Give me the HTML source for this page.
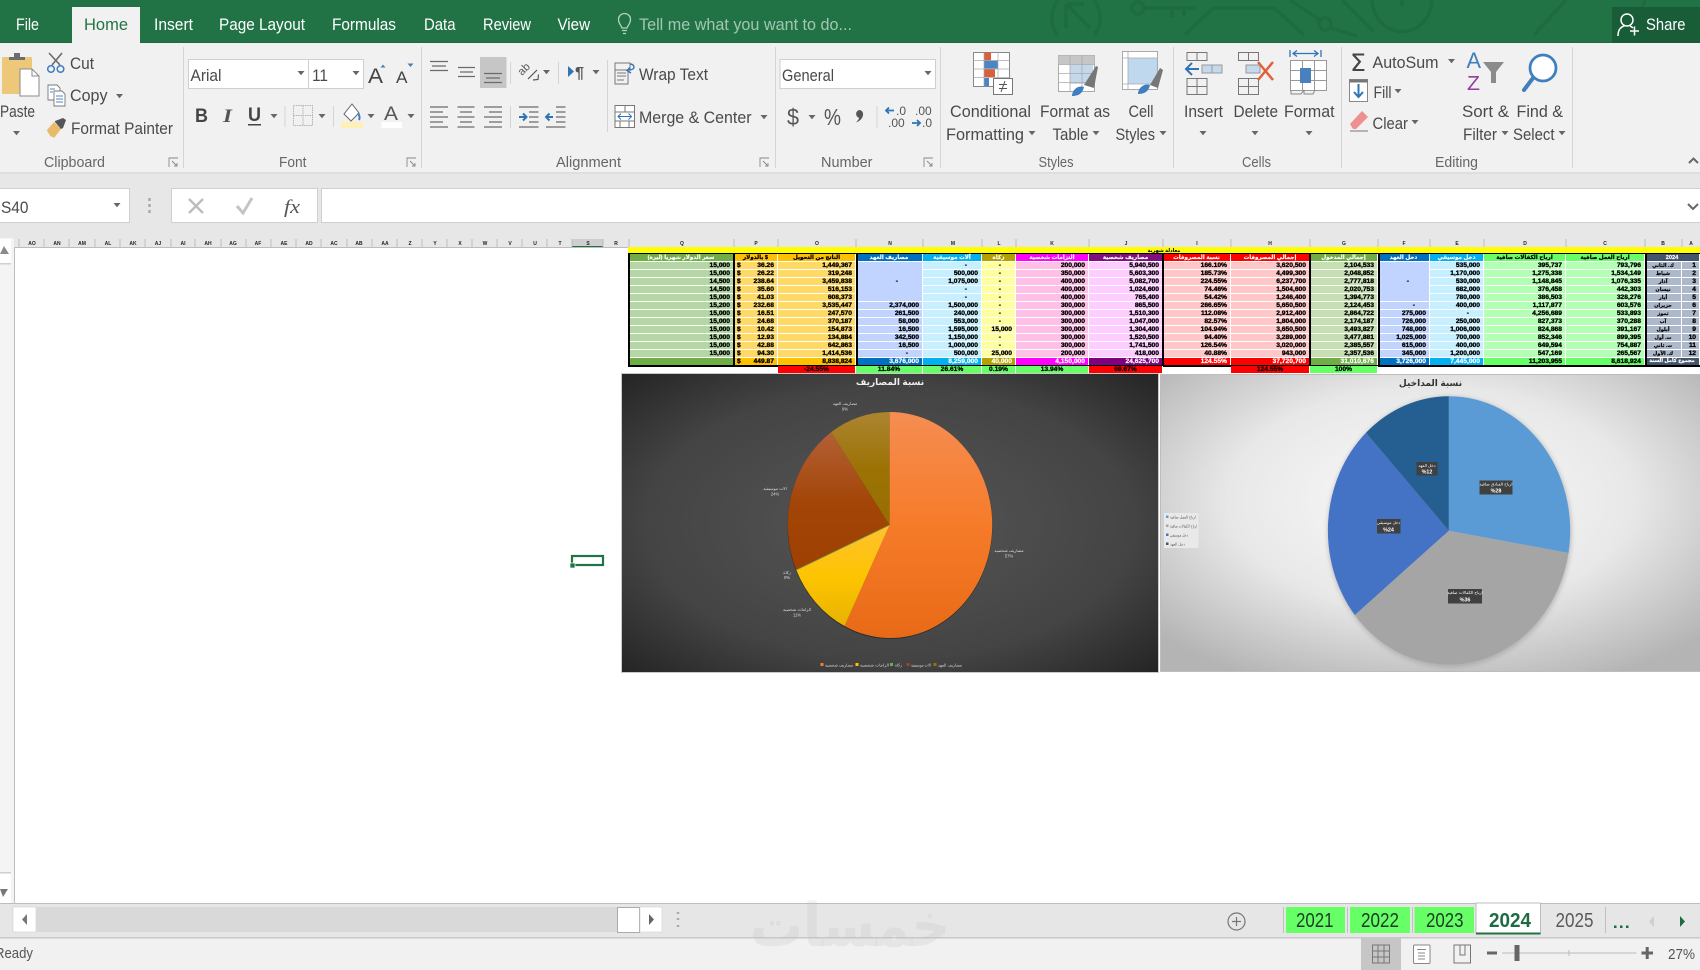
<!DOCTYPE html>
<html lang="en"><head><meta charset="utf-8"><title>Excel</title>
<style>
html,body{margin:0;padding:0;width:1700px;height:970px;overflow:hidden;background:#fff}
#w{position:relative;width:1700px;height:970px;overflow:hidden;filter:blur(.3px)}
svg{position:absolute;left:0;top:0}
text{font-family:"Liberation Sans","DejaVu Sans",sans-serif}
.t{fill:#4a4a4a;font-size:17px}
.g{fill:#666;font-size:15px}
.c{font-size:5px;font-weight:bold;fill:#222;text-anchor:middle}
.l{font-size:4.2px;fill:#ddd;text-anchor:middle}
.m{font-size:4.2px;fill:#fff;text-anchor:middle}
.b{font-size:5.4px;fill:#fff;font-weight:bold;text-anchor:middle}
table{position:absolute;left:629px;top:254px;width:1071px;table-layout:fixed;border-collapse:separate;border-spacing:0;font:bold 6.7px "Liberation Sans","DejaVu Sans",sans-serif;color:#000;-webkit-text-stroke:.3px #000}
td{box-sizing:border-box;height:8px;padding:1px 3px 0;line-height:6px;border-right:1px solid #fff;border-bottom:1px solid #fff;text-align:right;overflow:hidden;white-space:nowrap;vertical-align:middle}
td i{float:left;font-style:normal}
td.z{padding-right:14px}
td.n{padding:1px 1px 0;font-size:5px;-webkit-text-stroke:.15px #000;text-align:center;overflow:visible}
tr.h td{text-align:center;background:var(--b);color:#fff;-webkit-text-stroke:.15px #fff;font-size:5.6px;overflow:visible;line-height:5px;padding:2px 2px 0}
tr.h td.k{color:#000;-webkit-text-stroke:.2px #000}
tr.s td{height:7px;border-bottom:0;line-height:7px;padding:0 3px;background:var(--b);color:#fff;-webkit-text-stroke:.2px #fff;overflow:visible}
tr.s td.k{color:#000;-webkit-text-stroke:.3px #000}
.v{position:absolute;top:253px;height:113px;width:2px;background:#000}
.p{position:absolute;top:366px;height:7px;font:bold 6.7px/7px "Liberation Sans",sans-serif;text-align:center;border-right:1px solid #fff;box-sizing:border-box;-webkit-text-stroke:.25px currentColor}
</style></head><body><div id="w">
<svg width="1700" height="970" viewBox="0 0 1700 970" xmlns="http://www.w3.org/2000/svg">
<defs>
<path id="a" d="M-3.5-2h7L0 2.2z" fill="#666"/>
<filter id="sh" x="-20%" y="-20%" width="140%" height="140%"><feGaussianBlur stdDeviation="2.500"/></filter>
<linearGradient id="go" x1="0" y1="412" x2="0" y2="638" gradientUnits="userSpaceOnUse"><stop offset="0" stop-color="#f58d52"/><stop offset=".5" stop-color="#f67b29"/><stop offset="1" stop-color="#e86a17"/></linearGradient>
<linearGradient id="gy" x1="0" y1="525" x2="0" y2="630" gradientUnits="userSpaceOnUse"><stop offset="0" stop-color="#ffc12f"/><stop offset=".5" stop-color="#fdc400"/><stop offset="1" stop-color="#e5b100"/></linearGradient>
<linearGradient id="gb" x1="0" y1="430" x2="0" y2="580" gradientUnits="userSpaceOnUse"><stop offset="0" stop-color="#b46038"/><stop offset=".5" stop-color="#a24506"/><stop offset="1" stop-color="#9e3f00"/></linearGradient>
<linearGradient id="gl" x1="0" y1="412" x2="0" y2="525" gradientUnits="userSpaceOnUse"><stop offset="0" stop-color="#ab8531"/><stop offset=".5" stop-color="#9c7205"/><stop offset="1" stop-color="#977000"/></linearGradient>
<radialGradient id="d1" cx=".5" cy=".5" r=".7"><stop offset="0" stop-color="#565656"/><stop offset=".65" stop-color="#444"/><stop offset="1" stop-color="#252525"/></radialGradient>
<radialGradient id="d2" cx=".5" cy=".42" r=".68"><stop offset="0" stop-color="#fbfbfb"/><stop offset=".55" stop-color="#e8e8e8"/><stop offset="1" stop-color="#b4b4b4"/></radialGradient>
</defs>

<!-- title bar -->
<rect width="1700" height="43" fill="#217346"/>
<rect y="42" width="1700" height="1" fill="#1d6a40"/>
<g fill="none" stroke="#1e6b40" stroke-width="3.500">
<path d="M1058 0c-8 10-8 26 0 35M1094 0c8 10 8 26 0 35M1066 4l0 24M1066 4h18M1066 4l24 24"/>
<circle cx="1138" cy="8" r="6"/><path d="M1144 8h52M1172 8v9M1184 8v9"/>
<path d="M1185 35l28-27h61l30 27"/><circle cx="1325" cy="24" r="6"/>
<path d="M1290 0l30 20M1330 28l27 8M1342 0l32 32"/>
<path d="M1372 0c3 42 57 42 60 0M1402 0v6"/><path d="M1534 35l32-35M1645 0l-12 35"/>
</g>
<rect x="72" y="7" width="68" height="36" fill="#f1f1f1"/>
<g font-size="17" fill="#fff">
<text x="16" y="30" textLength="23" lengthAdjust="spacingAndGlyphs">File</text>
<text x="84" y="30" textLength="44" lengthAdjust="spacingAndGlyphs" fill="#217346">Home</text>
<text x="154" y="30" textLength="39" lengthAdjust="spacingAndGlyphs">Insert</text>
<text x="219" y="30" textLength="86" lengthAdjust="spacingAndGlyphs">Page Layout</text>
<text x="332" y="30" textLength="64" lengthAdjust="spacingAndGlyphs">Formulas</text>
<text x="424" y="30" textLength="31.500" lengthAdjust="spacingAndGlyphs">Data</text>
<text x="483" y="30" textLength="48" lengthAdjust="spacingAndGlyphs">Review</text>
<text x="557.500" y="30" textLength="32.500" lengthAdjust="spacingAndGlyphs">View</text>
<text x="639" y="30" textLength="213" lengthAdjust="spacingAndGlyphs" fill="#a3c6b1">Tell me what you want to do...</text>
</g>
<g fill="none" stroke="#b5d2c1" stroke-width="1.300"><path d="M622 28c-1-3-3.500-4.500-3.500-8.500a6 6 0 0 1 12 0c0 4-2.500 5.500-3.500 8.500zM622 30.500h5M623 33.500h3"/></g>
<rect x="1612" y="7" width="88" height="36" fill="#195c38"/>
<g fill="none" stroke="#fff" stroke-width="1.500"><circle cx="1627" cy="20" r="6"/><path d="M1618 36c0-7 3-9 7-10.500M1630 26c1 .5 2 1 3 2M1630 31h9M1634.500 26.500v9"/></g>
<text x="1646" y="30" font-size="17" fill="#fff" textLength="39.500" lengthAdjust="spacingAndGlyphs">Share</text>

<!-- ribbon -->
<rect y="43" width="1700" height="129" fill="#f1f1f1"/>
<g fill="#d5d5d5"><rect x="183" y="47" width="1" height="121"/><rect x="421" y="47" width="1" height="121"/><rect x="775" y="47" width="1" height="121"/><rect x="940" y="47" width="1" height="121"/><rect x="1173" y="47" width="1" height="121"/><rect x="1341" y="47" width="1" height="121"/><rect x="1572" y="47" width="1" height="121"/></g>
<g class="g">
<text x="44" y="167" textLength="61" lengthAdjust="spacingAndGlyphs">Clipboard</text>
<text x="279" y="167" textLength="27.500" lengthAdjust="spacingAndGlyphs">Font</text>
<text x="556" y="167" textLength="65" lengthAdjust="spacingAndGlyphs">Alignment</text>
<text x="821" y="167" textLength="51.500" lengthAdjust="spacingAndGlyphs">Number</text>
<text x="1038.500" y="167" textLength="35" lengthAdjust="spacingAndGlyphs">Styles</text>
<text x="1242" y="167" textLength="29" lengthAdjust="spacingAndGlyphs">Cells</text>
<text x="1435" y="167" textLength="43" lengthAdjust="spacingAndGlyphs">Editing</text>
</g>
<g fill="none" stroke="#888" stroke-width=".9"><path d="M169 167v-9h9M172 161l5 5M177 163v3h-3M407 167v-9h9M410 161l5 5M415 163v3h-3M760 167v-9h9M763 161l5 5M768 163v3h-3M924 167v-9h9M927 161l5 5M932 163v3h-3"/></g>

<!-- clipboard -->
<rect x="2" y="57" width="30" height="37" rx="1" fill="#ecc878"/>
<path d="M9 60v-3h5v-4h6v4h5v3z" fill="#6d6d6d"/>
<path d="M20 69h12l7 7v20H20z" fill="#fff" stroke="#8a8a8a"/><path d="M32 69v7h7" fill="none" stroke="#8a8a8a"/>
<text x="0" y="117" class="t" textLength="35" lengthAdjust="spacingAndGlyphs">Paste</text>
<use href="#a" x="16.500" y="133"/>
<g fill="none" stroke="#6b6b6b" stroke-width="1.600"><path d="M49 53l11 12M62 53l-10 12"/></g>
<g fill="none" stroke="#3d7fc1" stroke-width="1.500"><circle cx="51" cy="69" r="3.300"/><circle cx="60.500" cy="69" r="3.300"/></g>
<text x="70" y="69" class="t" textLength="24" lengthAdjust="spacingAndGlyphs">Cut</text>
<g stroke="#777" fill="#fff" stroke-width=".9"><path d="M48 85h9l3 3v12H48z"/><path d="M54 91h8l3 3v12H54z"/></g><path d="M50 89h5M50 92h3M56 96h7M56 99h7M56 102h7" stroke="#4a86c5" fill="none"/>
<text x="70" y="101" class="t" textLength="37.500" lengthAdjust="spacingAndGlyphs">Copy</text>
<use href="#a" x="119.500" y="96"/>
<path d="M47 130l7-8 7 7-7 9c-1-2-4-1-4-2 0-2-2-2-3-6z" fill="#e7bb6a"/><path d="M55 121l8-3 3 2-3 8-2 1-6-7z" fill="#555"/>
<text x="71" y="134" class="t" textLength="102" lengthAdjust="spacingAndGlyphs">Format Painter</text>

<!-- font -->
<rect x="188.500" y="59.500" width="120" height="29" fill="#fff" stroke="#cfcfcf"/><rect x="308.500" y="59.500" width="55" height="29" fill="#fff" stroke="#cfcfcf"/>
<text x="190.500" y="81" class="t" textLength="31" lengthAdjust="spacingAndGlyphs">Arial</text>
<text x="312" y="81" class="t" textLength="16" lengthAdjust="spacingAndGlyphs">11</text>
<use href="#a" x="301" y="73"/><use href="#a" x="356" y="73"/>
<text x="368" y="83" font-size="21" fill="#444" textLength="15" lengthAdjust="spacingAndGlyphs">A</text>
<path d="M380.500 67.500h5l-2.500-3z" fill="#4a7fb5"/>
<text x="396" y="83" font-size="17" fill="#444" textLength="11.500" lengthAdjust="spacingAndGlyphs">A</text>
<path d="M407.500 63.500h6l-3 3.500z" fill="#4a7fb5"/>
<text x="195" y="122" font-size="19" font-weight="bold" fill="#444" textLength="13" lengthAdjust="spacingAndGlyphs">B</text>
<text x="223" y="122" font-size="19" font-style="italic" font-weight="bold" fill="#555" textLength="9" lengthAdjust="spacingAndGlyphs" style="font-family:'Liberation Serif',serif">I</text>
<text x="248" y="121" font-size="19" font-weight="bold" fill="#444" textLength="13" lengthAdjust="spacingAndGlyphs">U</text>
<rect x="248" y="124" width="13" height="1.500" fill="#444"/>
<use href="#a" x="274" y="116"/><rect x="284.500" y="106" width="1" height="21" fill="#d5d5d5"/>
<path d="M293.500 105.500h19v20h-19zM303 105.500v20M293.500 115.500h19" fill="none" stroke="#b4b4b4" stroke-dasharray="1.500 .8"/>
<use href="#a" x="322" y="116"/><rect x="333" y="106" width="1" height="21" fill="#d5d5d5"/>
<path d="M352 104l-8 10 7 7 8-8z" fill="#fff" stroke="#666"/><path d="M358 113c2 3 2 5 1 7" stroke="#3d7fc1" stroke-width="2" fill="none"/><rect x="341" y="122" width="22" height="6" fill="#fdf0b8"/>
<use href="#a" x="371" y="116"/>
<text x="384" y="120" font-size="19" fill="#555" textLength="14" lengthAdjust="spacingAndGlyphs">A</text>
<rect x="381.500" y="122" width="20.500" height="6" fill="#fff"/><use href="#a" x="411" y="116"/>

<!-- alignment -->
<rect x="480" y="57" width="26.500" height="31" fill="#c6c6c6"/>
<g stroke="#6b6b6b" stroke-width="1.300" fill="none">
<path d="M430 61.500h18M432 66h14M430 70.500h18M458 67.500h17M460 72h13M458 76.500h17M484 73.500h18M486 78h14M484 82.500h18"/>
<path d="M430 107h18M430 112h13M430 117h18M430 122h13M430 127h18M457.500 107h17M460 112h12M457.500 117h17M460 122h12M457.500 127h17M484 107h18M489 112h13M484 117h18M489 122h13M484 127h18"/>
<path d="M529 107h9.500M529 112h9.500M529 117h9.500M529 122h9.500M519 127h19.500M519 107h19.500M556 107h9.500M556 112h9.500M556 117h9.500M556 122h9.500M546 127h19.500"/>
</g>
<path d="M519 117h7M523 113.500l3.500 3.500-3.500 3.500M553 117h-7M549.500 113.500l-3.500 3.500 3.500 3.500" stroke="#2f75b5" stroke-width="2" fill="none"/>
<g fill="#d5d5d5"><rect x="510" y="62" width="1" height="22"/><rect x="510" y="106" width="1" height="22"/><rect x="558" y="62" width="1" height="22"/><rect x="607" y="60" width="1" height="72"/></g>
<text x="0" y="0" font-size="11" fill="#555" transform="translate(522 76) rotate(-45)">ab</text>
<path d="M528 79l9-9M533 80l5-.5 .5-5" fill="none" stroke="#555" stroke-width="1.200"/>
<use href="#a" x="546.500" y="72"/>
<path d="M568 66l6 5.500-6 5.500z" fill="#2f75b5"/><text x="575" y="78" font-size="16" font-weight="bold" fill="#555" textLength="9" lengthAdjust="spacingAndGlyphs">¶</text>
<use href="#a" x="596" y="72"/>
<path d="M615 63h15v7h-15zM615 70v14h13v-14M617 73h9M617 76h9M617 80h7" fill="none" stroke="#777"/><path d="M629 70c7 0 6-6 1-6M631 73l-4-2.500 3-3" stroke="#2f75b5" fill="none" stroke-width="1.400"/>
<text x="639" y="80" class="t" textLength="69" lengthAdjust="spacingAndGlyphs">Wrap Text</text>
<path d="M615 105.500h19.500v22H615zM615 112h19.500M615 121h19.500M625 105.500v6.500M620 121v6.500M629 121v6.500" fill="#fff" stroke="#777"/><path d="M618 116.500h13.500M621 113.500l-3 3 3 3M628.500 113.500l3 3-3 3" stroke="#2f75b5" fill="none"/>
<text x="639" y="123" class="t" textLength="112.500" lengthAdjust="spacingAndGlyphs">Merge &amp; Center</text>
<use href="#a" x="764" y="117"/>

<!-- number -->
<rect x="780" y="59.500" width="155.500" height="29" fill="#fff" stroke="#cfcfcf"/>
<text x="782" y="81" class="t" textLength="52" lengthAdjust="spacingAndGlyphs">General</text>
<use href="#a" x="928" y="73"/>
<text x="787" y="125" font-size="23" fill="#555" textLength="12" lengthAdjust="spacingAndGlyphs">$</text>
<use href="#a" x="812" y="117"/>
<text x="824" y="125" font-size="23" fill="#555" textLength="17" lengthAdjust="spacingAndGlyphs">%</text>
<path d="M859.500 110a4 4 0 0 1 3.500 5c-.5 3.500-3 6-7 7.500 2-2 3-3.500 3-4.700a4 4 0 0 1 .5-7.800z" fill="#555"/>
<rect x="876.500" y="106" width="1" height="22" fill="#d5d5d5"/>
<g font-size="12" fill="#555">
<text x="896" y="115">.0</text><text x="888" y="127">.00</text><text x="915" y="115">.00</text><text x="922" y="127">.0</text>
</g>
<path d="M894 110.500h-8M889 107.500l-3 3 3 3M912 123h8M917 120l3 3-3 3" stroke="#2f75b5" stroke-width="1.800" fill="none"/>

<!-- styles -->
<g>
<rect x="973.500" y="52.500" width="36" height="34" fill="#fff" stroke="#888"/>
<rect x="984" y="52.500" width="7" height="8" fill="#d9603a"/><rect x="984" y="60.500" width="14" height="8" fill="#4a86c5"/><rect x="984" y="69" width="11" height="8" fill="#d9603a"/><rect x="984" y="78" width="5" height="8" fill="#4a86c5"/>
<path d="M973.500 60.500h36M973.500 69h36M973.500 77.500h36M984 52.500v34M998 52.500v34" fill="none" stroke="#aaa" stroke-width=".7"/>
<rect x="993.500" y="78.500" width="19" height="16" fill="#fff" stroke="#777"/><path d="M999 84.500h8M999 88.500h8M1005 81l-4 11" stroke="#555" fill="none"/>
</g>
<g>
<rect x="1058.500" y="55.500" width="36" height="36" fill="#fff" stroke="#aaa"/><rect x="1058.500" y="55.500" width="36" height="9" fill="#c6c6c6"/>
<rect x="1070" y="64" width="23" height="20" fill="#c4d8ec"/>
<path d="M1058.500 64.500h36M1058.500 73.500h36M1058.500 82.500h36M1070 55.500v36M1082 55.500v36" fill="none" stroke="#aaa" stroke-width=".8"/>
<path d="M1084 85l12-19 2 1-4 21z" fill="#777"/><path d="M1072 96c0-6 6-11 12-9-1 4-3 9-12 9z" fill="#3f7fbd"/>
</g>
<g>
<rect x="1122.500" y="51.500" width="35" height="38" fill="#fff" stroke="#aaa"/><rect x="1128" y="58" width="29" height="26" fill="#c0d8ee"/>
<path d="M1122.500 58h35M1128 51.500v38M1122.500 84h35" fill="none" stroke="#aaa" stroke-width=".8"/>
<path d="M1150 85l10-17 3 2-5 18z" fill="#777"/><path d="M1138 94c0-6 6-11 12-9-1 4-3 9-12 9z" fill="#3f7fbd"/>
</g>
<g class="t">
<text x="950" y="117" textLength="81" lengthAdjust="spacingAndGlyphs">Conditional</text>
<text x="946" y="140" textLength="78" lengthAdjust="spacingAndGlyphs">Formatting</text>
<text x="1040" y="117" textLength="70" lengthAdjust="spacingAndGlyphs">Format as</text>
<text x="1052.500" y="140" textLength="36" lengthAdjust="spacingAndGlyphs">Table</text>
<text x="1128.500" y="117" textLength="25" lengthAdjust="spacingAndGlyphs">Cell</text>
<text x="1115.500" y="140" textLength="39.500" lengthAdjust="spacingAndGlyphs">Styles</text>
<text x="1184" y="117" textLength="39" lengthAdjust="spacingAndGlyphs">Insert</text>
<text x="1233.500" y="117" textLength="44.500" lengthAdjust="spacingAndGlyphs">Delete</text>
<text x="1284" y="117" textLength="50.500" lengthAdjust="spacingAndGlyphs">Format</text>
<text x="1372.500" y="68" textLength="66" lengthAdjust="spacingAndGlyphs">AutoSum</text>
<text x="1373.500" y="98" textLength="18" lengthAdjust="spacingAndGlyphs">Fill</text>
<text x="1372.500" y="129" textLength="35.500" lengthAdjust="spacingAndGlyphs">Clear</text>
<text x="1462" y="117" textLength="47" lengthAdjust="spacingAndGlyphs">Sort &amp;</text>
<text x="1463" y="140" textLength="34" lengthAdjust="spacingAndGlyphs">Filter</text>
<text x="1516.500" y="117" textLength="46.500" lengthAdjust="spacingAndGlyphs">Find &amp;</text>
<text x="1513" y="140" textLength="41.500" lengthAdjust="spacingAndGlyphs">Select</text>
</g>
<use href="#a" x="1032" y="133"/><use href="#a" x="1096" y="133"/><use href="#a" x="1163" y="133"/>
<use href="#a" x="1203" y="133"/><use href="#a" x="1255" y="133"/><use href="#a" x="1309" y="133"/>
<use href="#a" x="1451.500" y="61"/><use href="#a" x="1398" y="91"/><use href="#a" x="1415" y="122"/><use href="#a" x="1505" y="133"/><use href="#a" x="1562" y="133"/>

<!-- cells -->
<g fill="none" stroke="#777"><path d="M1187 52.500h20v8h-20zM1197 52.500v8M1187 78.500h20v16h-20zM1197 78.500v16M1187 86.500h20"/></g>
<rect x="1202" y="65" width="20" height="8" fill="#c3d9ee" stroke="#999"/><path d="M1212 65v8" stroke="#999"/>
<path d="M1199 69h-13M1192 63l-6 6 6 6" stroke="#2f75b5" stroke-width="2" fill="none"/>
<g fill="none" stroke="#777"><path d="M1238.500 52.500h20v8h-20zM1248.500 52.500v8M1238.500 78.500h20v16h-20zM1248.500 78.500v16M1238.500 86.500h20"/></g>
<rect x="1246" y="65" width="14" height="8" fill="#c3d9ee" stroke="#999"/>
<path d="M1258 62l15 18M1273 62l-15 18" stroke="#e0603a" stroke-width="2.500" fill="none"/>
<path d="M1290.500 60.500h36v30h-36zM1302.500 60.500v30M1314.500 60.500v30M1290.500 70.500h36M1290.500 80.500h36" fill="#fff" stroke="#999"/>
<rect x="1300" y="68" width="11" height="15" fill="#4a80bb"/>
<path d="M1291 90v4h10l3-4M1304 90v4h9l2-4" fill="none" stroke="#888"/>
<path d="M1290 50v7M1321 50v7M1293 53.500h25M1297 50.500l-4 3 4 3M1314 50.500l4 3-4 3" fill="none" stroke="#2f75b5" stroke-width="1.300"/>

<!-- editing -->
<text x="1350" y="71" font-size="24" fill="#444" textLength="16" lengthAdjust="spacingAndGlyphs" style="font-family:'DejaVu Sans',sans-serif">Σ</text>
<rect x="1349.500" y="79.500" width="18" height="22" fill="#fff" stroke="#888"/><rect x="1349.500" y="79.500" width="18" height="3" fill="#777"/>
<path d="M1358.500 84v13M1354 92l4.500 5 4.500-5" stroke="#2f75b5" stroke-width="2" fill="none"/>
<path d="M1350 124l12-13 6 6-12 12h-3z" fill="#ef8f90"/><path d="M1350 131h18" stroke="#777"/>
<text x="1466.500" y="68" font-size="22" fill="#3f7fbd" textLength="14.500" lengthAdjust="spacingAndGlyphs">A</text>
<text x="1467" y="90" font-size="20" fill="#953c9e" textLength="13" lengthAdjust="spacingAndGlyphs">Z</text>
<path d="M1483 62h21l-8 10v11h-5V72z" fill="#8b8b8b"/>
<circle cx="1543" cy="68" r="13" fill="#fff" stroke="#3f7fbd" stroke-width="2.800"/><path d="M1533 78l-9 12" stroke="#3f7fbd" stroke-width="4" fill="none" stroke-linecap="round"/>
<path d="M1689 163l4.500-4.500 4.500 4.500" fill="none" stroke="#666" stroke-width="2"/>

<!-- formula bar + header strip -->
<rect y="172" width="1700" height="76" fill="#e7e7e7"/>
<rect y="172" width="1700" height="2" fill="#dedede"/>
<rect x="-1" y="188.500" width="130.500" height="34" fill="#fff" stroke="#cfcfcf"/>
<text x="1" y="213" class="t" textLength="27.500" lengthAdjust="spacingAndGlyphs">S40</text>
<use href="#a" x="117" y="205"/>
<path d="M149.500 198v3M149.500 204v3M149.500 210v3" stroke="#aaa" stroke-width="2.500" fill="none"/>
<rect x="171.500" y="188.500" width="146" height="34" fill="#fff" stroke="#cfcfcf"/>
<rect x="321.500" y="188.500" width="1379" height="34" fill="#fff" stroke="#cfcfcf"/>
<path d="M189 199l14 14M203 199l-14 14" stroke="#bdbdbd" stroke-width="2.500" fill="none"/>
<path d="M237 206l6 7 9-15" stroke="#c4c4c4" stroke-width="3" fill="none"/>
<text x="284" y="213" font-size="19" font-style="italic" fill="#555" textLength="16" lengthAdjust="spacingAndGlyphs" style="font-family:'Liberation Serif',serif">fx</text>
<path d="M1688 204l5 5 5-5" fill="none" stroke="#666" stroke-width="2"/>

<!-- column headers -->
<rect x="572" y="239" width="31" height="8" fill="#cfcfcf"/>
<rect x="572" y="246" width="31" height="1.500" fill="#217346"/>
<rect x="15" y="247" width="1685" height="1" fill="#bdbdbd"/>
<g stroke="#b5b5b5" stroke-width=".8" fill="none"><path d="M19 239v8M44 239v8M69 239v8M95 239v8M120 239v8M145 239v8M171 239v8M195 239v8M221 239v8M246 239v8M271 239v8M296 239v8M321 239v8M347 239v8M372 239v8M397 239v8M422 239v8M447 239v8M472 239v8M497 239v8M522 239v8M547 239v8M572 239v8M603 239v8M629 239v8M734 239v8M778 239v8M856 239v8M923 239v8M982 239v8M1016 239v8M1089 239v8M1163 239v8M1231 239v8M1310 239v8M1378 239v8M1430 239v8M1484 239v8M1566 239v8M1645 239v8M1682 239v8"/></g>
<g class="c">
<text x="32" y="245">AO</text><text x="57" y="245">AN</text><text x="82" y="245">AM</text><text x="108" y="245">AL</text><text x="133" y="245">AK</text><text x="158" y="245">AJ</text><text x="183" y="245">AI</text><text x="208" y="245">AH</text><text x="233" y="245">AG</text><text x="258" y="245">AF</text><text x="284" y="245">AE</text><text x="309" y="245">AD</text><text x="334" y="245">AC</text><text x="359" y="245">AB</text><text x="385" y="245">AA</text><text x="410" y="245">Z</text><text x="435" y="245">Y</text><text x="460" y="245">X</text><text x="485" y="245">W</text><text x="510" y="245">V</text><text x="535" y="245">U</text><text x="560" y="245">T</text><text x="588" y="245">S</text><text x="616" y="245">R</text>
<text x="682" y="245">Q</text><text x="756" y="245">P</text><text x="817" y="245">O</text><text x="890" y="245">N</text><text x="953" y="245">M</text><text x="999" y="245">L</text><text x="1052" y="245">K</text><text x="1126" y="245">J</text><text x="1197" y="245">I</text><text x="1270" y="245">H</text><text x="1344" y="245">G</text><text x="1404" y="245">F</text><text x="1457" y="245">E</text><text x="1525" y="245">D</text><text x="1605" y="245">C</text><text x="1663" y="245">B</text><text x="1691" y="245">A</text>
</g>

<!-- sheet -->
<rect x="15" y="248" width="1685" height="655" fill="#fff"/>
<rect x="14" y="247" width="1" height="656" fill="#bdbdbd"/>
<rect x="0" y="238" width="14" height="666" fill="#f4f4f4"/>
<rect x="0" y="239" width="11" height="24" fill="#fff"/><rect x="0" y="263" width="11" height="1.500" fill="#cfcfcf"/>
<path d="M0 254l4-8 5 8z" fill="#8a8a8a"/>
<rect x="0" y="873" width="11" height="30" fill="#fff"/><rect x="0" y="872" width="11" height="1.500" fill="#cfcfcf"/>
<path d="M0 889h8l-5 8z" fill="#777"/>
<rect y="903" width="1700" height="1.500" fill="#bdbdbd"/>

<!-- selected cell S40 -->
<rect x="572" y="556" width="31" height="9" fill="none" stroke="#217346" stroke-width="2.200"/>
<rect x="570" y="563" width="5" height="5" fill="#217346" stroke="#fff" stroke-width=".7"/>

<!-- yellow row -->
<rect x="628" y="247" width="1072" height="6" fill="#ff0"/>
<rect x="628" y="253" width="1072" height="1.500" fill="#000"/>
<text x="1164" y="252" font-size="5" font-weight="bold" text-anchor="middle" fill="#000">معادلة شهرية</text>

<!-- chart 1 -->
<rect x="622" y="374" width="536" height="298" fill="url(#d1)"/>
<rect x="621.500" y="373.500" width="537" height="299" fill="none" stroke="#c9c9c9"/>
<text x="890" y="385" font-size="9" font-weight="bold" text-anchor="middle" fill="#f0f0f0">نسبة المصاريف</text>
<ellipse cx="890" cy="525.500" rx="102.500" ry="113.500" fill="#222" opacity=".7"/>
<path d="M889.600 525L889.600 412A102 113 0 1 1 844.500 626Z" fill="url(#go)"/>
<path d="M889.600 525L844.500 626A102 113 0 0 1 796.300 570Z" fill="url(#gy)"/>
<path d="M889.600 525L796.300 570A102 113 0 0 1 831 432.300Z" fill="url(#gb)"/>
<path d="M889.600 525L831 432.300A102 113 0 0 1 889.600 412Z" fill="url(#gl)"/>
<path d="M889.600 525L796.300 570" stroke="#6d9b4a" stroke-width=".7"/>
<g class="l">
<text x="845" y="405">مصاريف العهد</text><text x="845" y="410.500">9%</text>
<text x="775" y="490">الات موسيقية</text><text x="775" y="495.500">24%</text>
<text x="787" y="574">زكاة</text><text x="787" y="579">0%</text>
<text x="797" y="611">الزامات شخصية</text><text x="797" y="616.500">11%</text>
<text x="1009" y="552">مصاريف شخصية</text><text x="1009" y="557.500">57%</text>
</g>
<rect x="820.500" y="663" width="3" height="3" fill="#f3802e"/><rect x="855.500" y="663" width="3" height="3" fill="#ffc000"/><rect x="890" y="663" width="3" height="3" fill="#70ad47"/><rect x="906.500" y="663" width="3" height="3" fill="#9e4a14"/><rect x="933.500" y="663" width="3" height="3" fill="#997300"/>
<g class="l" style="text-anchor:start"><text x="825" y="666.500" textLength="28" lengthAdjust="spacingAndGlyphs">مصاريف شخصية</text><text x="860" y="666.500" textLength="29" lengthAdjust="spacingAndGlyphs">الزامات شخصية</text><text x="895" y="666.500" textLength="7" lengthAdjust="spacingAndGlyphs">زكاة</text><text x="911" y="666.500" textLength="20" lengthAdjust="spacingAndGlyphs">الات موسيقية</text><text x="938" y="666.500" textLength="24" lengthAdjust="spacingAndGlyphs">مصاريف العهد</text></g>

<!-- chart 2 -->
<rect x="1160.500" y="374" width="540" height="298" fill="url(#d2)"/>
<rect x="1160.500" y="374.500" width="540" height="297" fill="none" stroke="#bdbdbd"/>
<text x="1430.500" y="386" font-size="9" font-weight="bold" text-anchor="middle" fill="#333">نسبة المداخيل</text>
<ellipse cx="1449.500" cy="532" rx="122" ry="135.500" fill="#999" opacity=".55" filter="url(#sh)"/>
<path d="M1448.800 530.700L1448.800 396.200A121.400 134.500 0 0 1 1568.500 553Z" fill="#5b9bd5"/>
<path d="M1448.800 530.700L1568.500 553A121.400 134.500 0 0 1 1354.800 615Z" fill="#a5a5a5"/>
<path d="M1448.800 530.700L1354.800 615A121.400 134.500 0 0 1 1366 432.700Z" fill="#4472c4"/>
<path d="M1448.800 530.700L1366 432.700A121.400 134.500 0 0 1 1448.800 396.200Z" fill="#255e91"/>
<g fill="#404040"><rect x="1479.500" y="480.500" width="33" height="14"/><rect x="1448" y="589" width="34" height="14.500"/><rect x="1377" y="519" width="23.500" height="14.500"/><rect x="1416.500" y="462" width="21" height="13.500"/></g>
<text x="1496" y="485.500" class="m">ارباح الفنادق صافية</text><text x="1496" y="492.500" class="b">%28</text>
<text x="1465" y="594" class="m">ارباح الكفالات صافية</text><text x="1465" y="601.500" class="b">%36</text>
<text x="1388.500" y="524" class="m">دخل موسيقي</text><text x="1388.500" y="531.500" class="b">%24</text>
<text x="1427" y="467" class="m">دخل العهد</text><text x="1427" y="473.500" class="b">%12</text>
<rect x="1164" y="513" width="34.500" height="35" fill="#e9e9e9"/>
<rect x="1166" y="515.500" width="2.500" height="2.500" fill="#5b9bd5"/><rect x="1166" y="524.500" width="2.500" height="2.500" fill="#a5a5a5"/><rect x="1166" y="533.500" width="2.500" height="2.500" fill="#4472c4"/><rect x="1166" y="542.500" width="2.500" height="2.500" fill="#255e91"/>
<g class="l" style="fill:#555;text-anchor:start"><text x="1170" y="518.500" textLength="26" lengthAdjust="spacingAndGlyphs">ارباح العمل صافية</text><text x="1170" y="527.500" textLength="27" lengthAdjust="spacingAndGlyphs">ارباح الكفالات صافية</text><text x="1170" y="536.500" textLength="18" lengthAdjust="spacingAndGlyphs">دخل موسيقي</text><text x="1170" y="545.500" textLength="15" lengthAdjust="spacingAndGlyphs">دخل العهد</text></g>

<!-- tab bar -->
<rect y="904" width="1700" height="33" fill="#e6e6e6"/>
<rect y="937" width="1700" height="1.500" fill="#c8c8c8"/>
<rect x="13" y="907" width="23" height="25" fill="#fff" stroke="#d0d0d0" stroke-width=".6"/>
<path d="M27 914l-5 5.500 5 5.500z" fill="#777"/>
<rect x="36" y="907" width="581" height="25" fill="#d9d9d9"/>
<rect x="617.500" y="907.500" width="22" height="25" fill="#fff" stroke="#aaa"/>
<rect x="640" y="907" width="22" height="25" fill="#fff" stroke="#d0d0d0" stroke-width=".6"/>
<path d="M649 914l5 5.500-5 5.500z" fill="#666"/>
<path d="M678 912v2M678 918v2M678 925v2" stroke="#aaa" stroke-width="2.500"/>
<circle cx="1236.500" cy="921.500" r="8.500" fill="none" stroke="#777" stroke-width="1.200"/><path d="M1232 921.500h9M1236.500 917v9" stroke="#777" stroke-width="1.200"/>
<rect x="1283" y="907" width="1" height="26" fill="#c0c0c0"/>
<rect x="1286" y="907" width="59" height="26" fill="#66ff66"/>
<rect x="1347" y="907" width="1" height="26" fill="#c0c0c0"/>
<rect x="1350" y="907" width="60" height="26" fill="#66ff66"/>
<rect x="1412" y="907" width="1" height="26" fill="#c0c0c0"/>
<rect x="1414.500" y="907" width="59.500" height="26" fill="#66ff66"/>
<path d="M1476 934v-31h64.500v31" fill="#fff" stroke="#bdbdbd"/>
<rect x="1476" y="932.500" width="64.500" height="2" fill="#217346"/>
<rect x="1605" y="907" width="1" height="26" fill="#c0c0c0"/>
<g font-size="20">
<text x="1296" y="927" fill="#1d3a26" textLength="37.500" lengthAdjust="spacingAndGlyphs">2021</text>
<text x="1361" y="927" fill="#1d3a26" textLength="38" lengthAdjust="spacingAndGlyphs">2022</text>
<text x="1426" y="927" fill="#1d3a26" textLength="37.500" lengthAdjust="spacingAndGlyphs">2023</text>
<text x="1489" y="927" fill="#1f6b41" font-weight="bold" textLength="42" lengthAdjust="spacingAndGlyphs">2024</text>
<text x="1555.500" y="927" fill="#595959" textLength="38" lengthAdjust="spacingAndGlyphs">2025</text>
</g>
<path d="M1614 925.500h2.500v2.500h-2.500zM1620 925.500h2.500v2.500h-2.500zM1626 925.500h2.500v2.500h-2.500z" fill="#1f6b41"/>
<path d="M1654 916l-5 5.500 5 5.500z" fill="#cfcfcf"/>
<path d="M1680 916l5 5.500-5 5.500z" fill="#1f6b41"/>

<!-- status bar -->
<rect y="938.500" width="1700" height="31.500" fill="#f1f1f1"/>
<text x="-5" y="958" font-size="15" fill="#555" textLength="38" lengthAdjust="spacingAndGlyphs">Ready</text>
<rect x="1361" y="938.500" width="40" height="31.500" fill="#c6c6c6"/>
<path d="M1372.500 945h17v18h-17zM1372.500 951h17M1372.500 957h17M1378 945v18M1384 945v18" fill="none" stroke="#777"/>
<rect x="1413.500" y="945" width="16.500" height="18.500" rx="1" fill="#fff" stroke="#888"/><path d="M1417 949.500h9M1418 953h7M1418 956h7M1418 959h7" stroke="#888" fill="none"/>
<path d="M1454 945h16.500v18H1454zM1460 945v10h5v-10" fill="none" stroke="#777"/>
<path d="M1487 953h10" stroke="#666" stroke-width="3"/>
<path d="M1502 953h134.500" stroke="#bbb" stroke-width="1"/><path d="M1569 950v6" stroke="#bbb"/>
<rect x="1514.500" y="945" width="5" height="16" fill="#666"/>
<path d="M1641.500 953h11.500M1647.200 947v12" stroke="#666" stroke-width="3"/>
<text x="1668" y="959" font-size="15" fill="#555" textLength="27" lengthAdjust="spacingAndGlyphs">27%</text>
<text x="850" y="946" font-size="60" font-weight="bold" text-anchor="middle" fill="#bbb" fill-opacity=".2" textLength="200" lengthAdjust="spacingAndGlyphs" style="font-family:'DejaVu Sans',sans-serif">خمسات</text>
</svg>

<table>
<colgroup>
<col style="width:105px;background:#b5d7a5"><col style="width:44px;background:#ffd966"><col style="width:78px;background:#ffd966"><col style="width:67px;background:#c1d4ff"><col style="width:59px;background:#c6efff"><col style="width:34px;background:#ffff9f"><col style="width:73px;background:#ffc0e8"><col style="width:74px;background:#ffccff"><col style="width:68px;background:#ffc7c7"><col style="width:79px;background:#ffc7c7"><col style="width:68px;background:#c6e0b4"><col style="width:52px;background:#c1d4ff"><col style="width:54px;background:#c6efff"><col style="width:82px;background:#b3ffb3"><col style="width:79px;background:#b3ffb3"><col style="width:37px;background:#adb9ca"><col style="width:18px;background:#adb9ca">
</colgroup>
<tr class="h"><td style="--b:#70ad47">سعر الدولار شهريا (ليرة)</td><td class="k" style="--b:#ffc000">بالدولار $</td><td class="k" style="--b:#ffc000">الناتج من التحويل</td><td style="--b:#0070c0">مصاريف العهد</td><td style="--b:#00b0f0">آلات موسيقية</td><td style="--b:#b2a100">زكاة</td><td style="--b:#ff00ff">التزامات شخصية</td><td style="--b:#7f0f7f">مصاريف شخصية</td><td style="--b:#f00">نسبة المصروفات</td><td style="--b:#f00">إجمالي المصروفات</td><td style="--b:#70ad47">إجمالي المدخول</td><td style="--b:#0070c0">دخل العهد</td><td style="--b:#00b0f0">دخل موسيقي</td><td class="k" style="--b:#66ff66">ارباح الكفالات صافية</td><td class="k" style="--b:#66ff66">ارباح العمل صافية</td><td colspan="2" style="--b:#44546a">2024</td></tr>
<tr><td>15,000</td><td><i>$</i>36.26</td><td>1,449,367</td><td rowspan="5" class="z" style="padding-right:24px">-</td><td class="z">-</td><td class="z">-</td><td>200,000</td><td>5,940,500</td><td>166.10%</td><td>3,620,500</td><td>2,104,533</td><td rowspan="5" class="z" style="padding-right:20px">-</td><td>535,000</td><td>395,737</td><td>793,796</td><td class="n">ك. الثاني</td><td>1</td></tr>
<tr><td>15,000</td><td><i>$</i>26.22</td><td>319,248</td><td>500,000</td><td class="z">-</td><td>350,000</td><td>5,603,300</td><td>185.73%</td><td>4,499,300</td><td>2,048,852</td><td>1,170,000</td><td>1,275,338</td><td>1,534,149</td><td class="n">شباط</td><td>2</td></tr>
<tr><td>14,500</td><td><i>$</i>238.64</td><td>3,459,838</td><td>1,075,000</td><td class="z">-</td><td>400,000</td><td>5,082,700</td><td>224.55%</td><td>6,237,700</td><td>2,777,818</td><td>530,000</td><td>1,148,845</td><td>1,076,335</td><td class="n">آذار</td><td>3</td></tr>
<tr><td>14,500</td><td><i>$</i>35.60</td><td>516,153</td><td class="z">-</td><td class="z">-</td><td>400,000</td><td>1,024,600</td><td>74.46%</td><td>1,504,600</td><td>2,020,753</td><td>682,000</td><td>376,458</td><td>442,303</td><td class="n">نيسان</td><td>4</td></tr>
<tr><td>15,000</td><td><i>$</i>41.03</td><td>608,373</td><td class="z">-</td><td class="z">-</td><td>400,000</td><td>765,400</td><td>54.42%</td><td>1,246,400</td><td>1,394,773</td><td>780,000</td><td>386,503</td><td>328,276</td><td class="n">أيار</td><td>5</td></tr>
<tr><td>15,200</td><td><i>$</i>232.68</td><td>3,535,447</td><td>2,374,000</td><td>1,500,000</td><td class="z">-</td><td>300,000</td><td>865,500</td><td>266.65%</td><td>5,650,500</td><td>2,124,453</td><td class="z">-</td><td>400,000</td><td>1,117,877</td><td>603,576</td><td class="n">حزيران</td><td>6</td></tr>
<tr><td>15,000</td><td><i>$</i>16.51</td><td>247,570</td><td>261,500</td><td>240,000</td><td class="z">-</td><td>300,000</td><td>1,510,300</td><td>112.08%</td><td>2,912,400</td><td>2,864,722</td><td>275,000</td><td class="z">-</td><td>4,256,689</td><td>533,893</td><td class="n">تموز</td><td>7</td></tr>
<tr><td>15,000</td><td><i>$</i>24.68</td><td>370,187</td><td>58,000</td><td>553,000</td><td class="z">-</td><td>300,000</td><td>1,047,000</td><td>82.57%</td><td>1,804,000</td><td>2,174,187</td><td>726,000</td><td>250,000</td><td>827,373</td><td>370,288</td><td class="n">آب</td><td>8</td></tr>
<tr><td>15,000</td><td><i>$</i>10.42</td><td>154,873</td><td>16,500</td><td>1,595,000</td><td>15,000</td><td>300,000</td><td>1,304,400</td><td>104.94%</td><td>3,650,500</td><td>3,493,827</td><td>748,000</td><td>1,006,000</td><td>824,868</td><td>391,167</td><td class="n">أيلول</td><td>9</td></tr>
<tr><td>15,000</td><td><i>$</i>12.93</td><td>134,884</td><td>342,500</td><td>1,150,000</td><td class="z">-</td><td>300,000</td><td>1,520,500</td><td>94.40%</td><td>3,289,000</td><td>3,477,881</td><td>1,025,000</td><td>700,000</td><td>852,346</td><td>899,395</td><td class="n">ت. أول</td><td>10</td></tr>
<tr><td>15,000</td><td><i>$</i>42.88</td><td>642,863</td><td>16,500</td><td>1,000,000</td><td class="z">-</td><td>300,000</td><td>1,741,500</td><td>126.54%</td><td>3,020,000</td><td>2,385,557</td><td>615,000</td><td>400,000</td><td>649,594</td><td>754,887</td><td class="n">ت. ثاني</td><td>11</td></tr>
<tr><td>15,000</td><td><i>$</i>94.30</td><td>1,414,536</td><td class="z">-</td><td>500,000</td><td>25,000</td><td>200,000</td><td>418,000</td><td>40.88%</td><td>943,000</td><td>2,357,536</td><td>345,000</td><td>1,200,000</td><td>547,169</td><td>265,567</td><td class="n">ك. الأول</td><td>12</td></tr>
<tr class="s"><td style="--b:#70ad47"></td><td class="k" style="--b:#ffc000"><i>$</i>449.87</td><td class="k" style="--b:#ffc000">8,838,824</td><td style="--b:#0070c0">3,676,000</td><td style="--b:#00b0f0">8,259,000</td><td style="--b:#b2a100">40,000</td><td style="--b:#ff00ff">4,150,000</td><td style="--b:#800080">24,625,700</td><td style="--b:#f00">124.55%</td><td style="--b:#f00">37,720,700</td><td style="--b:#70ad47">31,010,676</td><td style="--b:#0070c0">3,726,000</td><td style="--b:#00b0f0">7,445,000</td><td class="k" style="--b:#66ff66">11,203,955</td><td class="k" style="--b:#66ff66">8,618,924</td><td colspan="2" style="--b:#44546a;text-align:center;font-size:5px;padding:0">مجموع كامل السنة</td></tr>
</table>

<div class="v" style="left:628px"></div><div class="v" style="left:733px"></div><div class="v" style="left:856px"></div><div class="v" style="left:1162px"></div><div class="v" style="left:1309px"></div><div class="v" style="left:1378px"></div><div class="v" style="left:1645px"></div>
<div style="position:absolute;left:628px;top:365px;width:1072px;height:1.5px;background:#000"></div>

<div class="p" style="left:778px;width:78px;background:#f00">-24.55%</div>
<div class="p" style="left:856px;width:67px;background:#66ff66">11.84%</div>
<div class="p" style="left:923px;width:59px;background:#66ff66">26.61%</div>
<div class="p" style="left:982px;width:34px;background:#66ff66">0.19%</div>
<div class="p" style="left:1016px;width:73px;background:#66ff66">13.94%</div>
<div class="p" style="left:1089px;width:74px;background:#f00">69.67%</div>
<div class="p" style="left:1231px;width:79px;background:#f00">124.55%</div>
<div class="p" style="left:1310px;width:68px;background:#66ff66">100%</div>
</div></body></html>
